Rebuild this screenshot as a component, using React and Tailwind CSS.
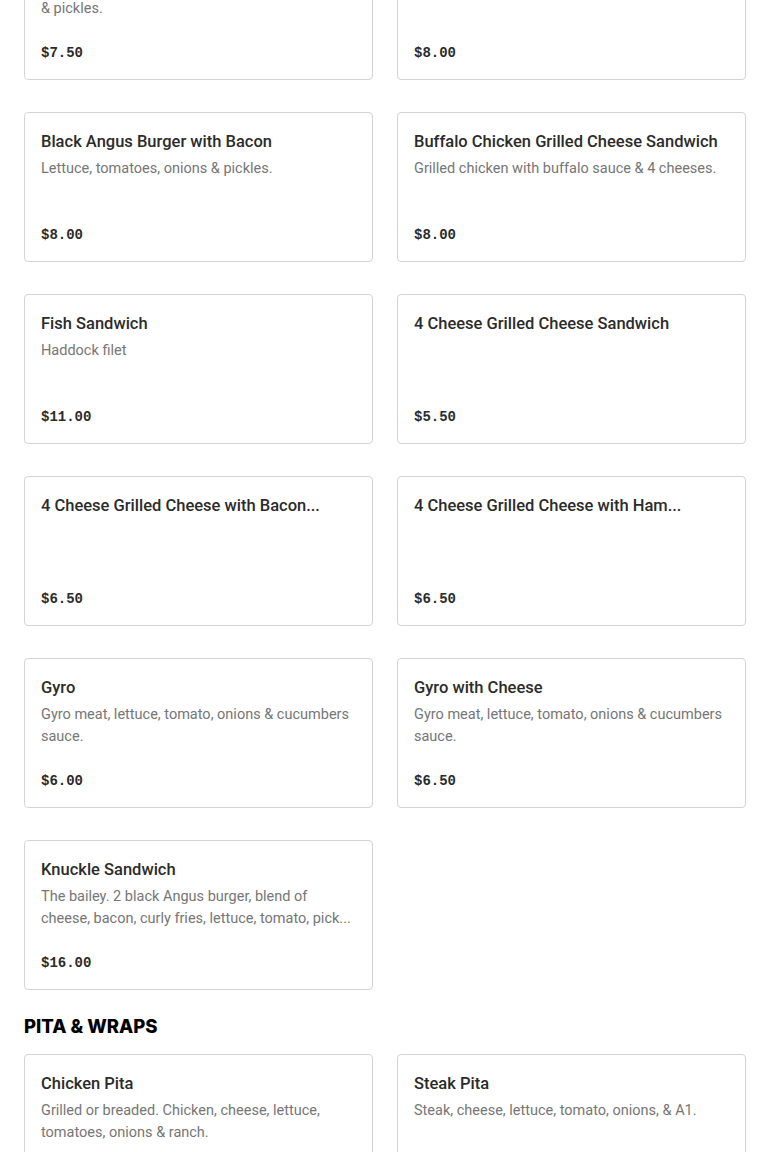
const sandwiches = [
  { name: 'Double Black Angus Burger', desc: <>Two patties, cheese, lettuce, tomatoes, onions<br />& pickles.</>, price: '$7.50' },
  { name: 'Black Angus Burger with Cheese', desc: 'Lettuce, tomatoes, onions & pickles.', price: '$8.00' },
  { name: 'Black Angus Burger with Bacon', desc: 'Lettuce, tomatoes, onions & pickles.', price: '$8.00' },
  { name: 'Buffalo Chicken Grilled Cheese Sandwich', desc: 'Grilled chicken with buffalo sauce & 4 cheeses.', price: '$8.00' },
  { name: 'Fish Sandwich', desc: 'Haddock filet', price: '$11.00' },
  { name: '4 Cheese Grilled Cheese Sandwich', desc: '', price: '$5.50' },
  { name: '4 Cheese Grilled Cheese with Bacon...', desc: '', price: '$6.50' },
  { name: '4 Cheese Grilled Cheese with Ham...', desc: '', price: '$6.50' },
  { name: 'Gyro', desc: 'Gyro meat, lettuce, tomato, onions & cucumbers sauce.', price: '$6.00' },
  { name: 'Gyro with Cheese', desc: 'Gyro meat, lettuce, tomato, onions & cucumbers sauce.', price: '$6.50' },
  {
    name: 'Knuckle Sandwich',
    desc: 'The bailey. 2 black Angus burger, blend of cheese, bacon, curly fries, lettuce, tomato, pick...',
    price: '$16.00',
  },
];

const pitas = [
  { name: 'Chicken Pita', desc: 'Grilled or breaded. Chicken, cheese, lettuce, tomatoes, onions & ranch.', price: '$7.00' },
  { name: 'Steak Pita', desc: 'Steak, cheese, lettuce, tomato, onions, & A1.', price: '$8.00' },
];

function ItemCard({ item }) {
  return (
    <div className="flex h-[150px] flex-col rounded border border-[#d4d4d4] bg-white px-4 pt-[17px] pb-4">
      <h3 className="truncate text-[16.5px] font-medium leading-6 text-[#2b2b2b]">{item.name}</h3>
      {item.desc && (
        <p className="mt-1 line-clamp-2 text-[14.5px] leading-[22px] text-[#767676]">{item.desc}</p>
      )}
      <div className="mt-auto font-['Liberation_Mono',monospace] text-[14px] font-bold leading-5 text-[#2b2b2b]">
        {item.price}
      </div>
    </div>
  );
}

export default function App() {
  return (
    <div className="min-h-screen bg-white font-['Roboto','Noto_Sans',sans-serif]">
      <div className="-mt-[70px] px-6">
        <div className="grid grid-cols-2 gap-x-6 gap-y-8">
          {sandwiches.map((item) => (
            <ItemCard key={item.name} item={item} />
          ))}
        </div>

        <h2 className="mt-[22px] mb-[14px] font-['Inter',sans-serif] text-[18.5px] font-extrabold uppercase leading-7 text-black">
          Pita &amp; Wraps
        </h2>
        <div className="grid grid-cols-2 gap-x-6 gap-y-8 pb-8">
          {pitas.map((item) => (
            <ItemCard key={item.name} item={item} />
          ))}
        </div>
      </div>
    </div>
  );
}
